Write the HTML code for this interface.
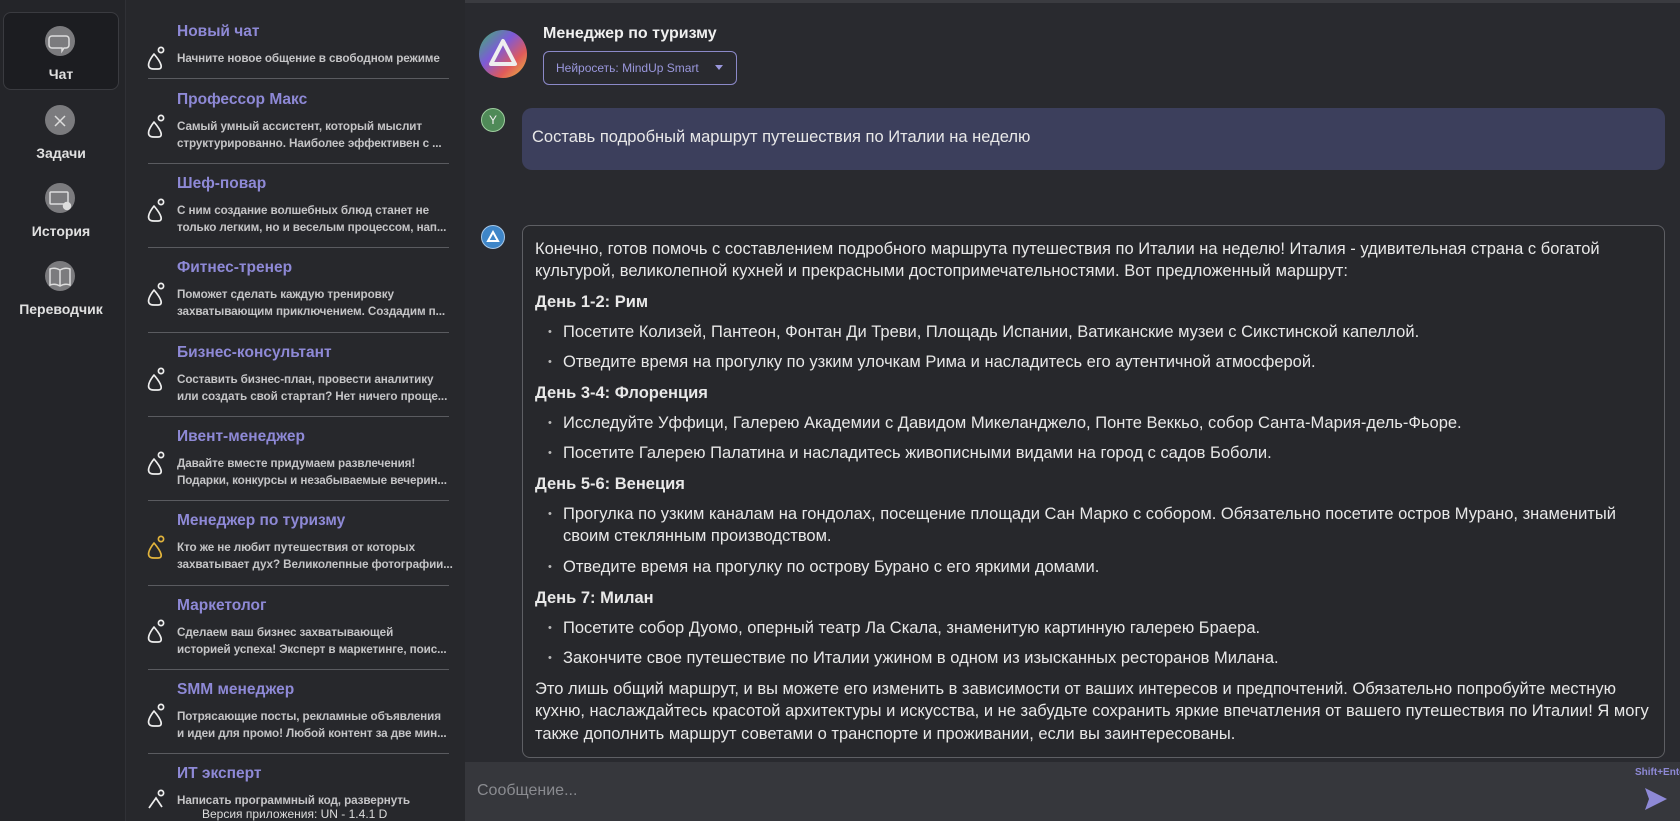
<!DOCTYPE html>
<html><head><meta charset="utf-8"><style>
*{margin:0;padding:0;box-sizing:border-box}
body{width:1680px;height:821px;overflow:hidden;background:#292a2f;font-family:"Liberation Sans",sans-serif;color:#e6e6e6;position:relative}
.a{position:absolute;white-space:nowrap}
.nav{position:absolute;left:0;top:0;width:126px;height:821px;background:#242529;border-right:1px solid #303136}
.list{position:absolute;left:126px;top:0;width:339px;height:821px;background:#27282c}
.top{position:absolute;left:0;top:0;width:1680px;height:3px;background:#3a3b40}
.ic{position:absolute;left:45px;width:30px;height:30px;border-radius:50%;background:#7b7b7e}
.nl{position:absolute;left:0;width:122px;text-align:center;font-size:14px;font-weight:bold;color:#e0e0e0}
.t{position:absolute;left:177px;font-size:15.5px;font-weight:bold;color:#8e89d6;white-space:nowrap}
.d{position:absolute;left:177px;font-size:11.7px;font-weight:bold;color:#c4c4c6;line-height:17px;white-space:nowrap;letter-spacing:-0.1px}
.sep{position:absolute;left:148px;width:301px;height:1px;background:#5a5b60}
.m{position:absolute;left:535px;font-size:16.5px;line-height:22px;white-space:nowrap;color:#e8e8e8}
.b{font-weight:bold}
.bl{left:548px}
.bl span{position:absolute;left:0;font-size:11px;color:#bbb}
.bl i{font-style:normal;position:absolute;left:15px}
</style></head><body>
<div class="top"></div>
<div class="nav">
<div style="position:absolute;left:3px;top:12px;width:116px;height:78px;border:1px solid #3a3b40;border-radius:8px;background:#1c1d21"></div>
<div class="ic" style="top:26px"></div><div class="nl" style="top:66px">Чат</div>
<div class="ic" style="top:105px"></div><div class="nl" style="top:145px">Задачи</div>
<div class="ic" style="top:183px"></div><div class="nl" style="top:223px">История</div>
<div class="ic" style="top:261px"></div><div class="nl" style="top:301px">Переводчик</div>
</div>
<svg class="a" style="left:0;top:0" width="126" height="330" fill="none" stroke="#ddd" stroke-width="1.5">
<path d="M52 36 h14 a3 3 0 0 1 3 3 v6 a3 3 0 0 1 -3 3 h-2 l-2 3 v-3 h-10 a3 3 0 0 1 -3 -3 v-6 a3 3 0 0 1 3 -3z"/>
<path d="M55 116 l5 5 M65 116 l-5 5 M55 126 l5 -5 M65 126 l-5 -5"/>
<rect x="50" y="192" width="18" height="12" rx="1"/><circle cx="67" cy="206" r="3.5" fill="#ddd"/>
<path d="M60 270 v16 M60 270 q-5 -3 -10 -1 v16 q5 -2 10 1 q5 -3 10 -1 v-16 q-5 -2 -10 1"/>
</svg>
<div class="list"></div>
<div class="t" style="top:23px">Новый чат</div><div class="d" style="top:50px">Начните новое общение в свободном режиме</div>
<div class="sep" style="top:78px"></div>
<div class="t" style="top:91px">Профессор Макс</div><div class="d" style="top:118px">Самый умный ассистент, который мыслит<br>структурированно. Наиболее эффективен с ...</div>
<div class="sep" style="top:163px"></div>
<div class="t" style="top:175px">Шеф-повар</div><div class="d" style="top:202px">С ним создание волшебных блюд станет не<br>только легким, но и веселым процессом, нап...</div>
<div class="sep" style="top:247px"></div>
<div class="t" style="top:259px">Фитнес-тренер</div><div class="d" style="top:286px">Поможет сделать каждую тренировку<br>захватывающим приключением. Создадим п...</div>
<div class="sep" style="top:332px"></div>
<div class="t" style="top:344px">Бизнес-консультант</div><div class="d" style="top:371px">Составить бизнес-план, провести аналитику<br>или создать свой стартап? Нет ничего проще...</div>
<div class="sep" style="top:416px"></div>
<div class="t" style="top:428px">Ивент-менеджер</div><div class="d" style="top:455px">Давайте вместе придумаем развлечения!<br>Подарки, конкурсы и незабываемые вечерин...</div>
<div class="sep" style="top:500px"></div>
<div class="t" style="top:512px">Менеджер по туризму</div><div class="d" style="top:539px">Кто же не любит путешествия от которых<br>захватывает дух? Великолепные фотографии...</div>
<div class="sep" style="top:585px"></div>
<div class="t" style="top:597px">Маркетолог</div><div class="d" style="top:624px">Сделаем ваш бизнес захватывающей<br>историей успеха! Эксперт в маркетинге, поис...</div>
<div class="sep" style="top:669px"></div>
<div class="t" style="top:681px">SMM менеджер</div><div class="d" style="top:708px">Потрясающие посты, рекламные объявления<br>и идеи для промо! Любой контент за две мин...</div>
<div class="sep" style="top:753px"></div>
<div class="t" style="top:765px">ИТ эксперт</div><div class="d" style="top:792px">Написать программный код, развернуть</div>
<div class="a" style="left:202px;top:807px;font-size:12px;color:#ddd">Версия приложения: UN - 1.4.1 D</div>
<svg class="a" style="left:0;top:0" width="465" height="821" fill="none" stroke-width="1.7">
<defs><g id="k"><path d="M154 0 q-7 9 -5 13 q1 2 5 2 h4 q4 0 3 -4 q-1 -4 -7 -11 z" stroke-linejoin="round"/><circle cx="161" cy="-4" r="2.6"/></g></defs>
<g stroke="#eee">
<use href="#k" y="54"/><use href="#k" y="122"/><use href="#k" y="206"/><use href="#k" y="290"/>
<use href="#k" y="375"/><use href="#k" y="459"/><use href="#k" y="627"/><use href="#k" y="711"/>
<path d="M149 808 l7 -10 l6 9"/><circle cx="161" cy="793" r="2.6"/>
</g>
<g stroke="#e2b43c"><use href="#k" y="543"/></g>
</svg>
<svg class="a" style="left:479px;top:30px" width="50" height="50"><defs><linearGradient id="g" x1="0" y1="0" x2="1" y2="1"><stop offset="0" stop-color="#3fb46a"/><stop offset=".4" stop-color="#7d5ad8"/><stop offset=".7" stop-color="#e05a5a"/><stop offset="1" stop-color="#e8c040"/></linearGradient></defs><circle cx="24" cy="24" r="24" fill="url(#g)"/><path d="M24 11 L36 34 H12 Z" fill="none" stroke="#eee" stroke-width="4" stroke-linejoin="round"/></svg>
<div class="a" style="left:543px;top:25px;font-size:16px;font-weight:bold;color:#f0f0f0">Менеджер по туризму</div>
<div class="a" style="left:543px;top:51px;width:194px;height:34px;border:1px solid #8b89c8;border-radius:6px"></div>
<div class="a" style="left:556px;top:61px;font-size:12px;color:#9a97dc">Нейросеть: MindUp Smart</div>
<div class="a" style="left:715px;top:65px;width:0;height:0;border-left:4px solid transparent;border-right:4px solid transparent;border-top:5px solid #9a97dc"></div>
<div class="a" style="left:481px;top:108px;width:24px;height:24px;border-radius:50%;background:#4f8a58;border:1px solid #9fcfa0;color:#eee;font-size:12px;text-align:center;line-height:22px">Y</div>
<div class="a" style="left:522px;top:108px;width:1143px;height:62px;border-radius:10px;background:#3c3f5c"></div>
<div class="m" style="left:532px;top:126px">Составь подробный маршрут путешествия по Италии на неделю</div>
<div class="a" style="left:481px;top:225px;width:24px;height:24px;border-radius:50%;background:#3f86c8;border:1px solid #a8c8e8"></div>
<svg class="a" style="left:486px;top:230px" width="14" height="14"><path d="M7 2 L12 11 H2 Z" fill="none" stroke="#fff" stroke-width="2"/></svg>
<div class="a" style="left:522px;top:225px;width:1143px;height:533px;border:1px solid #5e5f64;border-radius:8px;background:#27282c"></div>
<div class="m" style="top:238px">Конечно, готов помочь с составлением подробного маршрута путешествия по Италии на неделю! Италия - удивительная страна с богатой</div>
<div class="m" style="top:260px">культурой, великолепной кухней и прекрасными достопримечательностями. Вот предложенный маршрут:</div>
<div class="m b" style="top:291px">День 1-2: Рим</div>
<div class="m bl" style="top:321px"><span>•</span><i>Посетите Колизей, Пантеон, Фонтан Ди Треви, Площадь Испании, Ватиканские музеи с Сикстинской капеллой.</i></div>
<div class="m bl" style="top:351px"><span>•</span><i>Отведите время на прогулку по узким улочкам Рима и насладитесь его аутентичной атмосферой.</i></div>
<div class="m b" style="top:382px">День 3-4: Флоренция</div>
<div class="m bl" style="top:412px"><span>•</span><i>Исследуйте Уффици, Галерею Академии с Давидом Микеланджело, Понте Веккьо, собор Санта-Мария-дель-Фьоре.</i></div>
<div class="m bl" style="top:442px"><span>•</span><i>Посетите Галерею Палатина и насладитесь живописными видами на город с садов Боболи.</i></div>
<div class="m b" style="top:473px">День 5-6: Венеция</div>
<div class="m bl" style="top:503px"><span>•</span><i>Прогулка по узким каналам на гондолах, посещение площади Сан Марко с собором. Обязательно посетите остров Мурано, знаменитый<br>своим стеклянным производством.</i></div>
<div class="m bl" style="top:556px"><span>•</span><i>Отведите время на прогулку по острову Бурано с его яркими домами.</i></div>
<div class="m b" style="top:587px">День 7: Милан</div>
<div class="m bl" style="top:617px"><span>•</span><i>Посетите собор Дуомо, оперный театр Ла Скала, знаменитую картинную галерею Браера.</i></div>
<div class="m bl" style="top:647px"><span>•</span><i>Закончите свое путешествие по Италии ужином в одном из изысканных ресторанов Милана.</i></div>
<div class="m" style="top:678px">Это лишь общий маршрут, и вы можете его изменить в зависимости от ваших интересов и предпочтений. Обязательно попробуйте местную</div>
<div class="m" style="top:700px">кухню, наслаждайтесь красотой архитектуры и искусства, и не забудьте сохранить яркие впечатления от вашего путешествия по Италии! Я могу</div>
<div class="m" style="top:723px">также дополнить маршрут советами о транспорте и проживании, если вы заинтересованы.</div>
<div class="a" style="left:465px;top:762px;width:1215px;height:59px;background:#36373c"></div>
<div class="a" style="left:477px;top:782px;font-size:16px;color:#8a8b90">Сообщение...</div>
<div class="a" style="left:1635px;top:767px;font-size:10px;font-weight:bold;color:#8e89d6">Shift+Enter</div>
<svg class="a" style="left:1643px;top:786px" width="26" height="26"><path d="M2 2 L24 13 L2 24 L6 13 Z" fill="#8e89d6"/></svg>
</body></html>
